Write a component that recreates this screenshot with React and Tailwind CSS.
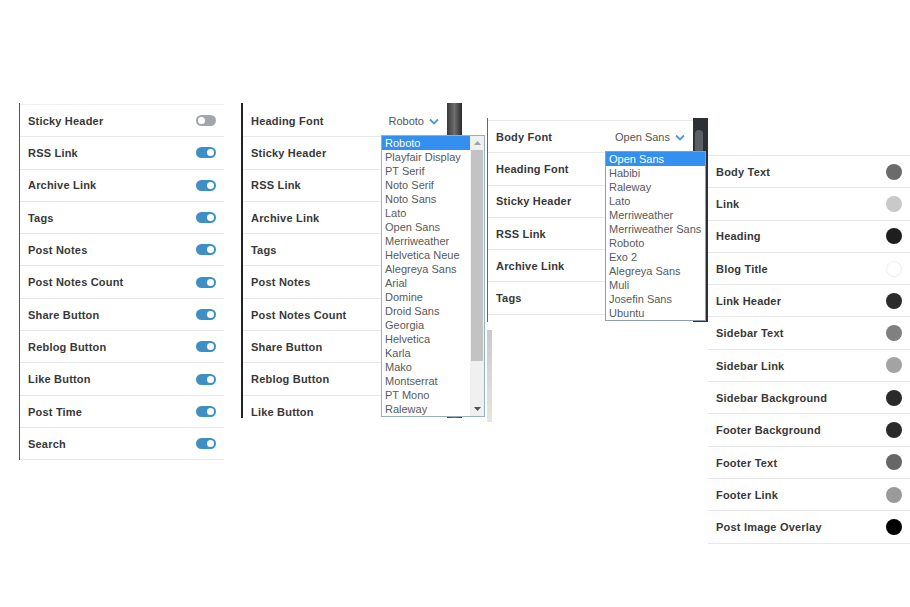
import React from 'react';

const panel1 = [
  ['Sticky Header', false],
  ['RSS Link', true],
  ['Archive Link', true],
  ['Tags', true],
  ['Post Notes', true],
  ['Post Notes Count', true],
  ['Share Button', true],
  ['Reblog Button', true],
  ['Like Button', true],
  ['Post Time', true],
  ['Search', true],
];

const panel2 = ['Sticky Header', 'RSS Link', 'Archive Link', 'Tags', 'Post Notes', 'Post Notes Count', 'Share Button', 'Reblog Button', 'Like Button'];
const panel3 = ['Heading Font', 'Sticky Header', 'RSS Link', 'Archive Link', 'Tags'];

const headingFonts = [
  'Roboto', 'Playfair Display', 'PT Serif', 'Noto Serif', 'Noto Sans', 'Lato', 'Open Sans', 'Merriweather',
  'Helvetica Neue', 'Alegreya Sans', 'Arial', 'Domine', 'Droid Sans', 'Georgia', 'Helvetica', 'Karla',
  'Mako', 'Montserrat', 'PT Mono', 'Raleway',
];
const bodyFonts = [
  'Open Sans', 'Habibi', 'Raleway', 'Lato', 'Merriweather', 'Merriweather Sans', 'Roboto', 'Exo 2',
  'Alegreya Sans', 'Muli', 'Josefin Sans', 'Ubuntu',
];

const colors = [
  ['Body Text', 'bg-[#6b6b6b]'],
  ['Link', 'bg-[#c9c9c9]'],
  ['Heading', 'bg-[#1e1e1e]'],
  ['Blog Title', 'bg-white border border-[#eeeeee]'],
  ['Link Header', 'bg-[#2b2b2b]'],
  ['Sidebar Text', 'bg-[#808080]'],
  ['Sidebar Link', 'bg-[#a3a3a3]'],
  ['Sidebar Background', 'bg-[#2a2a2a]'],
  ['Footer Background', 'bg-[#2a2a2a]'],
  ['Footer Text', 'bg-[#666666]'],
  ['Footer Link', 'bg-[#9a9a9a]'],
  ['Post Image Overlay', 'bg-black'],
];

const Toggle = ({ on }) => (
  <span
    className={`flex h-[11px] w-[20px] items-center rounded-full px-[2px] ${
      on ? 'justify-end bg-[#3f8fc7]' : 'justify-start bg-[#a3a6aa]'
    }`}
  >
    <span className="h-[7px] w-[7px] rounded-full bg-white" />
  </span>
);

const Chevron = () => (
  <svg width="10" height="7" viewBox="0 0 10 7" className="ml-[5px]">
    <path d="M1 1.5 L5 5.5 L9 1.5" fill="none" stroke="#4a9bd0" strokeWidth="1.8" />
  </svg>
);

const Row = ({ label, children }) => (
  <div className="flex h-[32.3px] shrink-0 items-center justify-between border-b border-[#e8e8e8] pl-2 pr-2">
    <span className="pt-[1px] text-[11px] font-bold tracking-[0.2px] text-[#383838]">{label}</span>
    {children}
  </div>
);

const FontSelect = ({ value }) => (
  <span className="flex items-center pt-[1px] text-[11px] text-[#555]">
    {value}
    <Chevron />
  </span>
);

const ListItem = ({ name, active }) => (
  <div
    className={`h-[14px] pl-[3px] text-[11px] leading-[14px] whitespace-nowrap ${
      active ? 'bg-[#3390f0] text-white' : 'text-[#5a5a5a]'
    }`}
  >
    {name}
  </div>
);

export default function App() {
  return (
    <div className="flex h-[607px] w-[910px] items-start overflow-hidden bg-white font-['Liberation_Sans',Arial,sans-serif]">
      {/* Panel 1: toggles */}
      <div className="ml-[19px] mt-[103px] w-[205px] border-l border-[#555] pt-[1px]">
        <div className="border-t border-[#eeeeee]">
          {panel1.map(([label, on]) => (
            <Row key={label} label={label}>
              <Toggle on={on} />
            </Row>
          ))}
        </div>
      </div>

      {/* Panel 2: heading font dropdown */}
      <div className="relative ml-[17px] mt-[103px] flex h-[315px] w-[221px]">
        <div className="flex w-[206px] flex-col overflow-hidden border-l-2 border-[#222] pt-[2px]">
          <Row label="Heading Font">
            <FontSelect value="Roboto" />
          </Row>
          {panel2.map((label) => (
            <Row key={label} label={label}>
              <Toggle on />
            </Row>
          ))}
        </div>
        <div className="w-[15px] bg-gradient-to-r from-[#3a3a3a] via-[#6e6e6e] to-[#2a2a2a]" />

        <div className="absolute left-[140px] top-[32px] flex h-[282px] w-[104px] border border-[#9aaec6] bg-white">
          <div className="flex-1">
            {headingFonts.map((f, i) => (
              <ListItem key={f} name={f} active={i === 0} />
            ))}
          </div>
          <div className="flex w-[14px] flex-col bg-[#f0f0f0]">
            <div className="flex h-[14px] items-center justify-center">
              <svg width="7" height="4" viewBox="0 0 7 4">
                <path d="M0 4 L3.5 0 L7 4 Z" fill="#a0a0a0" />
              </svg>
            </div>
            <div className="mx-[1px] h-[211px] bg-[#c3c3c3]" />
            <div className="flex-1" />
            <div className="flex h-[14px] items-center justify-center">
              <svg width="7" height="4" viewBox="0 0 7 4">
                <path d="M0 0 L3.5 4 L7 0 Z" fill="#505050" />
              </svg>
            </div>
          </div>
        </div>
      </div>

      {/* Panel 3: body font dropdown */}
      <div className="ml-[25px] mt-[118px] flex w-[221px] flex-col">
        <div className="relative flex h-[204px]">
          <div className="flex w-[206px] flex-col border-l border-[#666] pt-[2px]">
            <div className="border-t border-[#e8e8e8]">
              <Row label="Body Font">
                <FontSelect value="Open Sans" />
              </Row>
              {panel3.map((label) => (
                <Row key={label} label={label}>
                  <Toggle on />
                </Row>
              ))}
            </div>
          </div>
          <div className="w-[15px] bg-[#2d3136] pl-[2px] pt-[12px]">
            <div className="h-[24px] w-[8px] rounded-full bg-[#5c5f63]" />
          </div>

          <div className="absolute left-[118px] top-[33px] h-[170px] w-[101px] border border-[#8d9db2] bg-white">
            {bodyFonts.map((f, i) => (
              <ListItem key={f} name={f} active={i === 0} />
            ))}
          </div>
        </div>
        <div className="mt-[8px] h-[92px] w-[5px] bg-gradient-to-b from-[#c9c9d2] to-[#e6e6dc]" />
      </div>

      {/* Panel 4: colours */}
      <div className="mt-[155px] w-[202px] border-t border-[#e8e8e8]">
        {colors.map(([label, swatch]) => (
          <Row key={label} label={label}>
            <span className={`h-[16px] w-[16px] rounded-full ${swatch}`} />
          </Row>
        ))}
      </div>
    </div>
  );
}
